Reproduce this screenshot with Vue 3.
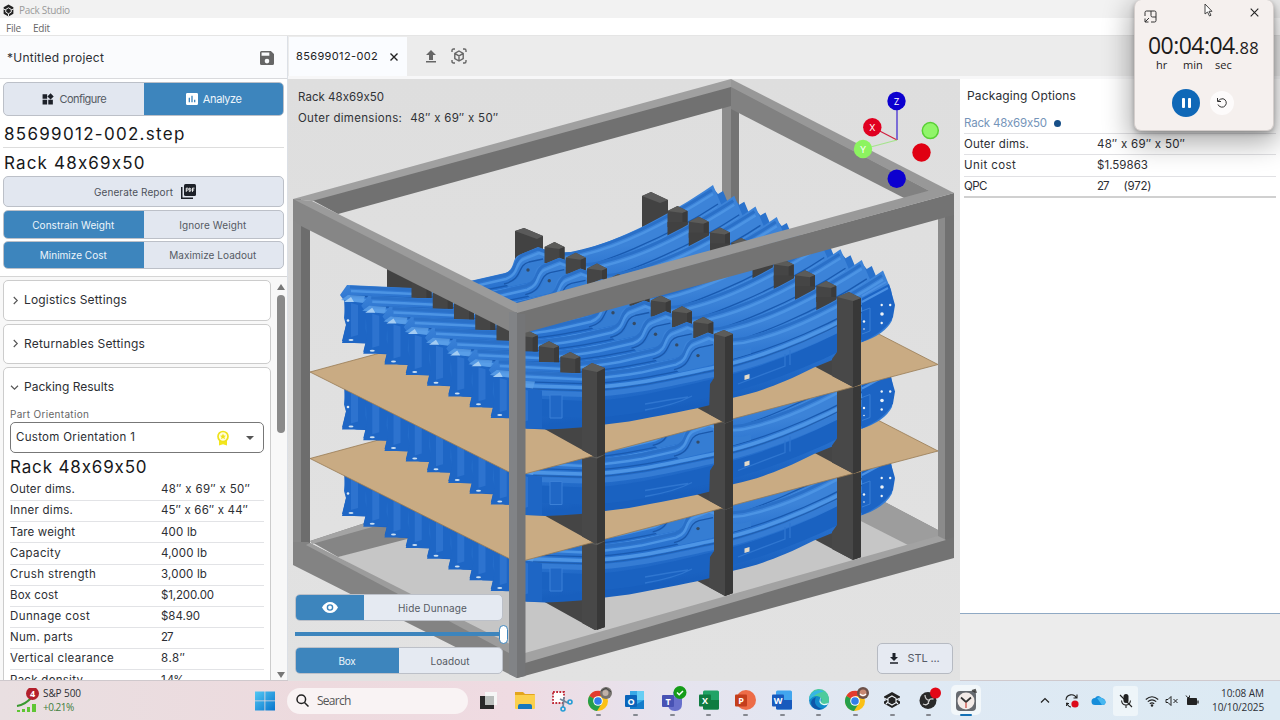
<script setup>
const vFit = {
  mounted(el, { value }) {
    const r = document.createRange()
    r.selectNodeContents(el)
    const w = r.getBoundingClientRect().width
    el.style.letterSpacing = (value - w) / (el.textContent.length - 0.5) + 'px'
  },
}
const results = [
  ['Outer dims.', 65, '48″ x 69″ x 50″', 89],
  ['Inner dims.', 63, '45″ x 66″ x 44″', 87],
  ['Tare weight', 65, '400 lb', 36],
  ['Capacity', 51, '4,000 lb', 46],
  ['Crush strength', 86, '3,000 lb', 46],
  ['Box cost', 48, '$1,200.00', 53],
  ['Dunnage cost', 80, '$84.90', 39],
  ['Num. parts', 63, '27', 12],
  ['Vertical clearance', 104, '8.8″', 24],
  ['Pack density', 73, '1.4%', 23],
]
const options = [
  ['Outer dims.', 65, '48″ x 69″ x 50″', 88],
  ['Unit cost', 52, '$1.59863', 51],
]
const layers = [173, 86.5, 0]
const parts = [0, 1, 2, 3, 4, 5, 6, 7, 8]
const stepOf = (i) => `translate(${i * 21.25} ${i * 10.7})`
const curve = 'M350 287L413 290Q447 287 470 283L505 275C519 270 513 259 523 255L538 249Q560 258 582 251C620 242 668 218 712 190'
const lower = 'M350 290L413 292C460 291 500 281 548 271C600 260 670 230 718 198'
const offices = [
  { name: 'excel', letter: 'X', c1: '#21a366', c2: '#107c41' },
  { name: 'powerpoint', letter: 'P', c1: '#ed6c47', c2: '#c43e1c' },
  { name: 'word', letter: 'W', c1: '#41a5ee', c2: '#185abd' },
]
</script>

<template>
  <div class="screen">
    <header class="titlebar">
      <svg class="app-icon" viewBox="0 0 24 24"><path d="M12 1l9 5v12l-9 5-9-5V6z" fill="#222"/><path d="M12 7l5 3v5l-5 3-5-3v-5z" fill="#222" stroke="#f2f2f2" stroke-width="1.800"/><path d="M2 9l5 2M22 9l-5 2M12 23v-5" stroke="#f2f2f2" stroke-width="1.800"/></svg>
      <span v-fit="51">Pack Studio</span>
    </header>
    <nav class="menubar"><span v-fit="15">File</span><span v-fit="17">Edit</span></nav>

    <div class="body">
      <aside class="left">
        <div class="project">
          <span v-fit="97">*Untitled project</span>
          <svg width="14" height="14" viewBox="3 3 18 18"><path fill="#666" d="M17 3H5a2 2 0 0 0-2 2v14a2 2 0 0 0 2 2h14a2 2 0 0 0 2-2V7zm-5 16a3 3 0 1 1 0-6 3 3 0 0 1 0 6zm3-10H5V5h10z"/></svg>
        </div>
        <div class="controls">
          <div class="toggle tall">
            <div class="seg">
              <svg width="12" height="12" viewBox="2 1 21 21"><path fill="#1d2129" d="M3 3h8v8H3zM3 13h8v8H3zM13 13h8v8h-8zM17 1.500L22.500 7 17 12.500 11.500 7z"/></svg>
              <span v-fit="47">Configure</span>
            </div>
            <div class="seg on">
              <svg width="12" height="12" viewBox="3 3 18 18"><path fill="#fff" fill-rule="evenodd" d="M5 3h14a2 2 0 0 1 2 2v14a2 2 0 0 1-2 2H5a2 2 0 0 1-2-2V5a2 2 0 0 1 2-2zm2 7v7h2v-7zm4-3v10h2V7zm4 6v4h2v-4z"/></svg>
              <span v-fit="39">Analyze</span>
            </div>
          </div>
          <div class="big file"><span v-fit="181">85699012-002.step</span></div>
          <div class="big rack"><span v-fit="141">Rack 48x69x50</span></div>
          <div class="report">
            <span v-fit="79">Generate Report</span>
            <svg width="15" height="15" viewBox="2 2 20 20"><path d="M3 6v15h15" fill="none" stroke="#1d2129" stroke-width="2"/><rect x="6" y="2" width="16" height="16" rx="2" fill="#1d2129"/><path d="M9 12.500V7.500h1.500a1.200 1.200 0 0 1 0 2.700H9M13 7.500v4.500h.8q1.400 0 1.400-2.200T13.800 7.500zM17.300 12.500V7.500H20M17.300 10H19.500" fill="none" stroke="#fff" stroke-width="1.200"/></svg>
          </div>
          <div class="toggle"><div class="seg on"><span v-fit="82">Constrain Weight</span></div><div class="seg"><span v-fit="67">Ignore Weight</span></div></div>
          <div class="toggle second"><div class="seg on"><span v-fit="67">Minimize Cost</span></div><div class="seg"><span v-fit="87">Maximize Loadout</span></div></div>
        </div>
        <div class="scroll">
          <div class="cards">
            <div class="card"><svg class="chev" viewBox="0 0 8 10"><path d="M2 1l4 4-4 4"/></svg><span v-fit="103">Logistics Settings</span></div>
            <div class="card"><svg class="chev" viewBox="0 0 8 10"><path d="M2 1l4 4-4 4"/></svg><span v-fit="121">Returnables Settings</span></div>
            <div class="card results">
              <div class="head"><svg class="chev wide" viewBox="0 0 10 8"><path d="M1 2l4 4 4-4"/></svg><span v-fit="90">Packing Results</span></div>
              <div class="label"><span v-fit="79">Part Orientation</span></div>
              <div class="select">
                <span v-fit="119">Custom Orientation 1</span>
                <svg class="medal" width="14" height="16" viewBox="0 0 14 16"><path d="M3 9h8v6.500l-4-1.300-4 1.300z" fill="#f3e61c"/><circle cx="7" cy="6.500" r="5" fill="#fffde0" stroke="#efe21b" stroke-width="1.700"/><path d="M7 3.500l.9 2 2.100.2-1.600 1.400.5 2.100L7 8.100l-1.900 1.100.5-2.100L4 5.700l2.100-.2z" fill="#efe21b"/></svg>
                <i class="caret"></i>
              </div>
              <div class="big inner"><span v-fit="137">Rack 48x69x50</span></div>
              <div v-for="r in results" :key="r[0]" class="row"><div><span v-fit="r[1]">{{ r[0] }}</span></div><span v-fit="r[3]">{{ r[2] }}</span></div>
            </div>
          </div>
          <div class="bar"><i class="up"></i><i class="thumb"></i><i class="down"></i></div>
        </div>
      </aside>

      <div class="work">
        <div class="tabs">
          <div class="tab"><span v-fit="82">85699012-002</span><svg width="10" height="10" viewBox="0 0 10 10"><path d="M1.500 1.500l7 7M8.500 1.500l-7 7" stroke="#222" stroke-width="1.400"/></svg></div>
          <svg class="upload" width="12" height="13" viewBox="0 0 12 13"><path fill="#666" d="M6 0l5 5H8v5H4V5H1zM1 11h10v1.500H1z"/></svg>
          <svg width="16" height="16" viewBox="0 0 16 16" fill="none" stroke="#666" stroke-width="1.400"><path d="M1 4V2.500Q1 1 2.500 1H4M12 1h1.500Q15 1 15 2.500V4M15 12v1.500q0 1.500-1.500 1.500H12M4 15H2.500Q1 15 1 13.500V12"/><path d="M8 3l4.200 2.500v5L8 13l-4.200-2.500v-5zM4 5.600l4 2.300 4-2.300M8 8v5"/></svg>
        </div>
        <div class="panes">
          <main class="view">
            <svg class="scene" viewBox="288 79 672 602" width="672" height="602">
              <defs>
                <linearGradient id="blue" gradientUnits="userSpaceOnUse" x1="500" y1="262" x2="508" y2="322"><stop offset="0" stop-color="#3c83d8"/><stop offset=".45" stop-color="#2770cd"/><stop offset="1" stop-color="#185fbe"/></linearGradient>
                <linearGradient id="bg" x1="0" y1="0" x2="0" y2="1"><stop offset="0" stop-color="#dedede"/><stop offset="1" stop-color="#e2e2e2"/></linearGradient>
                <g id="block"><path d="M0 3L10-2L20 3V19H0z" fill="#454545"/><path d="M0 3L10-2L20 3L15 5z" fill="#5b5b59"/><path d="M15 5L20 3V19H15z" fill="#3b3b3b"/></g>
                <g id="part">
                  <path d="M347 285L413 288Q450 285 470 281L505 273C516 269 511 259 519 255L538 247Q560 256 582 250C620 240 668 216 713 185L718 197L721 204L724 220L722 235Q715 249 691 257L666 273L644 282C610 299 590 306 564 312Q545 319 526 323T459 336L435 339L410 342Q380 345 354 343L365 341H342L346 325L344 318L345 302L340 295Z" fill="url(#blue)"/>
                  <path d="M350 321L413 324C460 323 500 312 548 301C600 289 660 264 708 235" fill="none" stroke="#1a62c1" stroke-width="17"/>
                  <path :d="curve" fill="none" stroke="#2a70c8" stroke-width="3"/>
                  <path :d="curve" fill="none" stroke="#4c94e4" stroke-width="2.500" transform="translate(1 4)"/>
                  <path :d="lower" fill="none" stroke="#195ab0" stroke-width="1.300" transform="translate(0 6)"/>
                  <path :d="lower" fill="none" stroke="#4d95e5" stroke-width="3.500" transform="translate(0 10)"/>
                  <path :d="lower" fill="none" stroke="#215faf" stroke-width="1.200" transform="translate(0 13)"/>
                  <path :d="lower" fill="none" stroke="#357cd4" stroke-width="5" transform="translate(0 17)"/>
                  <path d="M506 284C526 279 518 266 531 263L543 259Q567 269 581 262V268L544 279L509 287z" fill="#357dd3"/>
                  <path d="M504 284C524 279 516 266 529 262L543 259" fill="none" stroke="#1a58ab" stroke-width="1.300"/>
                  <circle cx="528" cy="270" r="1.700" fill="#354b65"/>
                  <path d="M344 300L372 305V343H342L346 325z" fill="#1e66c5"/>
                  <path d="M351 303L358 305V335L351 337z" fill="#2d73cf"/>
                  <path d="M341 300L348 295L365 296L363 303z" fill="#5da0e8" opacity=".8"/>
                  <path d="M344 302l7-5 3 5z" fill="#a4cdf3"/>
                  <ellipse cx="351" cy="340" rx="2.500" ry="1" fill="#cbdff2"/>
                </g>
                <g id="layer">
                  <path d="M387 262l12-3 13 6v32h-25zM515 231l9-3 19 8v30h-28zM642 196l9-4 17 8v30h-26z" fill="#424242"/>
                  <path d="M515 231l9-3 19 8-6 3zM642 196l9-4 17 8-8 3z" fill="#5a5a5a"/>
                  <path d="M541 410V427L595 457L605 454V390zM690 404L725 423L733 420V380zM810 364L853 387L861 384V340z" fill="#454545"/>
                  <g v-for="i in parts" :key="i">
                    <path v-if="i < 8" :transform="stepOf(i)" d="M713 188L718 194L723 191L728 203V218L712 228L700 215z" fill="#2a72cc"/>
                    <use href="#part" :transform="stepOf(i)"/>
                    <g v-if="i < 8" :transform="stepOf(i)"><use href="#block" x="411.500" y="279"/><use href="#block" x="544.500" y="244"/><use href="#block" x="667.500" y="208" /><path d="M667.500 222h20v9l-20 8z" fill="#414141"/></g>
                  </g>
                  <circle cx="348" cy="320.500" r="1.300" fill="#dbe8f4"/>
                  <path d="M582 369L592 363L605 368V454L595 457L582 450V427zM714 334L724 330L733 334V420L725 423L709 414L710 384L714 378zM837 297L849 292L861 298V384L853 387L832 376V359L837 352z" fill="#484848"/>
                  <path d="M597 372L605 368V454L597 457zM725 337L733 334V420L725 423zM853 301L861 298V384L853 387z" fill="#383838"/>
                  <path d="M582 369L592 363L605 368L597 372zM714 334L724 330L733 334L725 337zM837 297L849 292L861 298L853 301z" fill="#5c5c5a"/>
                  <path d="M862 298L889 284L895 305L893 317Q886 331 862 342z" fill="#1c64c4"/>
                  <path d="M862 296L886 282M862 302L888 288" stroke="#4b91e4" stroke-width="2"/>
                  <path d="M862 311l8-3v23l-8 3" fill="none" stroke="#397fd5"/>
                  <g fill="#eef3f8"><circle cx="881.700" cy="305" r="1.200"/><circle cx="890.200" cy="305" r="1.200"/><circle cx="882" cy="314" r="1.800"/><circle cx="881.700" cy="323" r="1.200"/><circle cx="864" cy="321.500" r="1.200"/><circle cx="864" cy="329" r=".8"/></g>
                  <path d="M744.500 375.500l5-1.500v4.500l-5 1.500z" fill="#e3dac9"/>
                  <path d="M550 395v23h12v-23z" fill="#2067c5" stroke="#3b80d7"/>
                  <path d="M645 410Q675 405 692 396M645 404Q673 399 688 397M738 384l47-18v-12M790 350v15" stroke="#2f76d0" stroke-width="1.300" fill="none"/>
                </g>
              </defs>
              <rect x="288" y="79" width="672" height="602" fill="url(#bg)"/>
              <path d="M338 557L405 537L860 519L910 543L938 541L526 656L400 592z" fill="#c6c6c6"/>
              <path d="M310 541L365 523L731 421L938 530L908 543L731 455L338 557z" fill="#858585"/>
              <path d="M731 421L938 530V540L908 545L731 455z" fill="#9d9d9d"/><path d="M310 541L365 523L731 421V426L312 544z" fill="#a4a4a4"/>
              <!-- rear top rails and post -->
              <path d="M722 106H731V300H722z" fill="#8b8b8b"/><path d="M731 106H739V300H731z" fill="#737373"/>
              <path d="M312 200L731 86V106L338 214z" fill="#717171"/><path d="M731 86L930 191L908 200L731 109z" fill="#818181"/>
              <path d="M293 199L731 79V87L312 201z" fill="#a0a0a0"/><path d="M731 79L954 193L935 194L731 87z" fill="#989898"/>
              <template v-for="(y, n) in layers" :key="y">
                <path v-if="n > 0" :transform="`translate(0 ${y})`" d="M310 372L517 476L938 364.500L731 258z" fill="#c9ab83" stroke="#987b54" stroke-width=".8"/>
                <use href="#layer" :y="y"/>
              </template>
              <!-- front frame -->
              <path d="M293 199H301V560H293z" fill="#878787"/><path d="M301 205H310V543H301z" fill="#6d6d6d"/>
              <path d="M938 205H946V540H938z" fill="#8b8b8b"/><path d="M945 196H954V558H945z" fill="#717171"/>
              <path d="M293 542H308L509 648L525 656L517 678L293 565z" fill="#838383"/><path d="M306 545L310 543L520 649L509 653z" fill="#9c9c9c"/>
              <path d="M517 662L954 537V558L517 678z" fill="#737373"/><path d="M525 653L938 536L946 540L525 663z" fill="#a2a2a2"/>
              <path d="M293 199L301 202L517 312V335L301 226L293 220z" fill="#868686"/><path d="M293 199L312 201L517 303L517 313z" fill="#9b9b9b"/>
              <path d="M517 312L954 193V215L517 335z" fill="#737373"/><path d="M517 303L935 189L954 193L517 313z" fill="#999"/>
              <path d="M509 312H517V678L509 674z" fill="#818386"/><path d="M517 314H525.500V676L517 678z" fill="#747577"/>
              <!-- orientation gizmo -->
              <g stroke-width="1.200"><path d="M897 101V140" stroke="#3a20d0"/><path d="M872 127L897 140" stroke="#d02040"/><path d="M863 149L897 140" stroke="#a5e48c"/></g>
              <circle cx="896.500" cy="101" r="9.200" fill="#0c00cf"/><circle cx="872.300" cy="127.300" r="9.200" fill="#e00020"/><circle cx="863" cy="149" r="9.200" fill="#8cf460"/>
              <circle cx="930.300" cy="130.600" r="8" fill="#91f56a" stroke="#59cf35" stroke-width="1.500"/><circle cx="921.500" cy="152.500" r="9.200" fill="#e00012"/><circle cx="896.700" cy="178.700" r="9.200" fill="#0c00cf"/>
              <g class="axis"><text x="896.500" y="104.500">Z</text><text x="872.300" y="131">X</text><text x="863" y="152.500">Y</text></g>
            </svg>
            <div class="caption"><div><span v-fit="86">Rack 48x69x50</span></div><div class="dims"><span v-fit="104">Outer dimensions:</span><span v-fit="88">48″ x 69″ x 50″</span></div></div>
            <div class="viewctl">
              <div class="toggle vt"><div class="seg on eye"><svg width="16" height="11" viewBox="0 0 16 11"><path fill="#fff" fill-rule="evenodd" d="M8 0Q13 0 16 5.500Q13 11 8 11T0 5.500Q3 0 8 0zm0 2.200a3.300 3.300 0 1 0 0 6.600 3.300 3.300 0 0 0 0-6.600zm0 1.400a1.900 1.900 0 1 1 0 3.800 1.900 1.900 0 0 1 0-3.800z"/></svg></div><div class="seg"><span v-fit="69">Hide Dunnage</span></div></div>
              <div class="slider"><i></i></div>
              <div class="toggle vt"><div class="seg on"><span v-fit="17">Box</span></div><div class="seg"><span v-fit="39">Loadout</span></div></div>
            </div>
            <div class="stl"><svg width="10" height="11" viewBox="0 0 10 11"><path fill="#1d2129" d="M3.500 0h3v4H9L5 8 1 4h2.500zM1 9.300h8v1.400H1z"/></svg><span v-fit="32">STL ...</span></div>
          </main>
          <aside class="right">
            <div class="options">
              <h2><span v-fit="109">Packaging Options</span></h2>
              <div class="orow link"><span v-fit="83">Rack 48x69x50</span><i></i></div>
              <div v-for="o in options" :key="o[0]" class="orow"><div><span v-fit="o[1]">{{ o[0] }}</span></div><span v-fit="o[3]">{{ o[2] }}</span></div>
              <div class="orow last"><div><span v-fit="23">QPC</span></div><span v-fit="12" class="n">27</span><span v-fit="28">(972)</span></div>
            </div>
          </aside>
        </div>
      </div>
    </div>

    <footer class="taskbar">
      <div class="stock">
        <svg width="24" height="26" viewBox="0 0 24 26"><path d="M2 18Q10 17 17 9" stroke="#39992e" stroke-width="2" fill="none"/><path d="M2 22h3v2H2zM7 21h3v3H7zM12 19h3v5h-3zM17 16h4v8h-4z" fill="#5fc634"/><circle cx="17.500" cy="5.500" r="6.500" fill="#b3202c"/><text x="17.500" y="9" class="badge">4</text></svg>
        <div><span v-fit="38">S&amp;P 500</span><span v-fit="31" class="gain">+0.21%</span></div>
      </div>
      <svg class="win" width="20" height="20" viewBox="0 0 20 20"><defs><linearGradient id="w" x2="1" y2="1"><stop stop-color="#52c8f4"/><stop offset="1" stop-color="#0874cc"/></linearGradient></defs><path fill="url(#w)" d="M0 .5h9.500v9H0zM10.300.5H20v9h-9.700zM0 10.200h9.500v9.300H0zM10.300 10.200H20v9.300h-9.700z"/></svg>
      <div class="search"><svg width="13" height="13" viewBox="0 0 13 13" fill="none" stroke="#222" stroke-width="1.500"><circle cx="5.300" cy="5.300" r="4.300"/><path d="M8.500 8.500l4 4"/></svg><span v-fit="34">Search</span></div>
      <div class="apps">
        <div class="slot first"><svg viewBox="0 0 24 24"><path d="M9 4h12v13H9z" fill="#f6f6f6"/><path d="M4 8h14v13H4z" fill="#292929"/><path d="M9 8h9v9H9z" fill="#b9bdbb"/></svg></div>
        <div class="slot"><svg viewBox="0 0 24 24"><path d="M2 4h8l2 2h9q1 0 1 1v13H2z" fill="#e3a51d"/><path d="M2 7h20v13q0 1-1 1H3q-1 0-1-1z" fill="#fbd04d"/><path d="M5 21v-3q0-2 2-2h10q2 0 2 2v3z" fill="#1678be"/></svg></div>
        <div class="slot"><svg viewBox="0 0 24 24"><path d="M3 4h11v11H3z" fill="#fff" stroke="#c02a38" stroke-width="1.800" stroke-dasharray="1.800 1.400"/><path d="M10 11l8 4M14 9l-1 10" stroke="#70879b" stroke-width="1.800"/><circle cx="20" cy="14" r="2" fill="none" stroke="#249dd6" stroke-width="1.600"/><circle cx="13" cy="21" r="2" fill="none" stroke="#249dd6" stroke-width="1.600"/></svg></div>
        <div class="slot run"><svg viewBox="0 0 24 24"><circle cx="11" cy="13" r="10" fill="#fbc116"/><path d="M11 13L2.300 8A10 10 0 0 1 20 8h-9z" fill="#e33b2e"/><path d="M2.300 8A10 10 0 0 0 10 23l5-8-4-2z" fill="#269f4b"/><circle cx="11" cy="13" r="4.800" fill="#fff"/><circle cx="11" cy="13" r="3.800" fill="#327ee8"/><circle cx="19" cy="5" r="6" fill="#77736f"/><circle cx="18.500" cy="5" r="3" fill="#c0b1a7"/><path d="M14 3l5-3 5 4" stroke="#444" fill="none"/></svg></div>
        <div class="slot run"><svg viewBox="0 0 24 24"><path d="M7 3h14v18H7z" fill="#38a9e6"/><path d="M14 3h7v9h-7z" fill="#67cef4"/><path d="M7 12l7 4 7-4v9H7z" fill="#147cca"/><rect x="2" y="7" width="12" height="12" rx="1" fill="#0a64ba"/><text x="8" y="16.500">O</text></svg></div>
        <div class="slot run"><svg viewBox="0 0 24 24"><circle cx="17" cy="6" r="4" fill="#7e86df"/><path d="M8 9h14v7q0 7-7 7t-7-7z" fill="#6870cc"/><rect x="2" y="7" width="12" height="12" rx="1" fill="#4852b4"/><text x="8" y="16.500">T</text><circle cx="20" cy="4.500" r="6.500" fill="#159c19"/><path d="M17 4.500l2.200 2.200L23 3" stroke="#fff" stroke-width="1.500" fill="none"/></svg></div>
        <div v-for="o in offices" :key="o.name" class="slot run"><svg viewBox="0 0 24 24"><circle v-if="o.letter === 'P'" cx="13" cy="12" r="10" :fill="o.c1"/><rect v-else x="6" y="2.500" width="16" height="19" rx="1.500" :fill="o.c1"/><path v-if="o.letter !== 'P'" d="M6 12h16v8q0 1.500-1.500 1.500h-13Q6 21.500 6 20z" :fill="o.c2"/><rect x="2" y="6.500" width="12" height="12" rx="1" :fill="o.c2"/><text x="8" y="16">{{ o.letter }}</text></svg></div>
        <div class="slot run"><svg viewBox="0 0 24 24"><circle cx="12" cy="12" r="10" fill="#118acb"/><path d="M2 12A10 10 0 0 1 22 10q1 7-6 7-4 0-2-3 2-5-4-6-5 0-8 4z" fill="#4ccb9c"/><path d="M2 12A10 10 0 0 1 17 3.500Q10 4 2 12z" fill="#36b6e5"/><path d="M14 9q-4 5 2 8 4 1 6-2l-5 1q-5-1-3-7z" fill="#eafafa"/><path d="M9 9q-4 9 7 12Q5 23 4 15q0-4 5-6z" fill="#0d57a9"/></svg></div>
        <div class="slot run"><svg viewBox="0 0 24 24"><circle cx="11" cy="13" r="10" fill="#fbc116"/><path d="M11 13L2.300 8A10 10 0 0 1 20 8h-9z" fill="#e33b2e"/><path d="M2.300 8A10 10 0 0 0 10 23l5-8-4-2z" fill="#269f4b"/><circle cx="11" cy="13" r="4.800" fill="#fff"/><circle cx="11" cy="13" r="3.800" fill="#327ee8"/><circle cx="19" cy="5" r="6" fill="#6c514a"/><circle cx="19" cy="5" r="3.500" fill="#c88872"/><path d="M16 6q3 3 6 0" stroke="#fff" stroke-width="1.500" fill="none"/></svg></div>
        <div class="slot run"><svg viewBox="0 0 24 24"><path d="M12 4l8 4.500v2l-2.500 1.500 2.500 1.500v2L12 20l-8-4.500v-2L6.500 12 4 10.500v-2z" fill="#222"/><path d="M12 8l4 2.300v4.400L12 17l-4-2.300v-4.400zM4 10l4 2M20 10l-4 2M6 16l2-2M18 16l-2-2" fill="none" stroke="#edf2f7" stroke-width="1.100"/></svg></div>
        <div class="slot run"><svg viewBox="0 0 24 24"><circle cx="11" cy="12.500" r="8.500" fill="#292929"/><path d="M8 7q0 5 5 5.500M16.500 11q-6-1-5 5M6 16q5 2.500 6-3.500" stroke="#ccc" stroke-width="1.300" fill="none"/><circle cx="18.500" cy="5" r="5.500" fill="#e20716"/></svg></div>
        <div class="slot active"><svg viewBox="0 0 24 24"><rect x="2" y="3" width="20" height="20" rx="4" fill="#666a70"/><circle cx="12" cy="13" r="8.500" fill="#f3ebe8"/><path d="M12 13v7" stroke="#cf5148" stroke-width="1.300"/><path d="M12 14L7 9.500M12 14l5-4.500" stroke="#333" stroke-width="1.700"/><path d="M18 3l3-1 1 3" stroke="#555" stroke-width="2"/></svg></div>
      </div>
      <div class="tray">
        <svg width="10" height="7" viewBox="0 0 10 7" class="t-chev"><path d="M1 5.500l4-4 4 4" fill="none" stroke="#222" stroke-width="1.200"/></svg>
        <svg width="16" height="16" viewBox="0 0 16 16" class="t-sync"><path d="M2 7A5.500 5.500 0 0 1 12.500 5M13 1.500V5H9.500M3 9.500l-.5 3.500M2 10.500h3M3 11q2 3 4 3" fill="none" stroke="#222" stroke-width="1.100"/><circle cx="11" cy="11" r="3.600" fill="#dc0a1b"/></svg>
        <svg width="15" height="11" viewBox="0 0 15 11" class="t-cloud"><path d="M4 10A3.500 3.500 0 0 1 4 3Q7-1 10.500 3 15 4 14.500 8 14 10 11.500 10z" fill="#168dda"/><path d="M6 3Q10 1 12 4q3 1 2.500 4Q14 10 11 10z" fill="#48b8f1"/></svg>
        <div class="mic"><svg width="16" height="16" viewBox="0 0 16 16"><rect x="5.500" y="1" width="5" height="9" rx="2.500" fill="#222"/><path d="M3.500 7.500Q4 12 8 12t4.500-4.500M8 12v3M2 2l12 12" stroke="#222" stroke-width="1.100" fill="none"/></svg></div>
        <svg width="14" height="12" viewBox="0 0 14 12" class="t-wifi"><path d="M.8 4.500Q7-1 13.200 4.500M2.800 6.700Q7 3 11.200 6.700M4.800 8.800Q7 7 9.200 8.800" fill="none" stroke="#222" stroke-width="1.100"/><circle cx="7" cy="10.500" r="1.200" fill="#222"/></svg>
        <svg width="14" height="12" viewBox="0 0 14 12" class="t-snd"><path d="M1 4.500h2L6 1.500v9l-3-3H1zM8.500 4l4 4M12.500 4l-4 4" fill="none" stroke="#222"/></svg>
        <svg width="14" height="12" viewBox="0 0 14 12" class="t-bat"><path d="M2.500 3.500h9v6H2.500z" fill="#222" stroke="#222"/><path d="M13 5.500v3" stroke="#222" stroke-width="1.300"/><path d="M1 .5l1.500 2h2V.5M3 2.500v4" stroke="#222" fill="none"/></svg>
        <div class="clock"><span v-fit="43">10:08 AM</span><span v-fit="52">10/10/2025</span></div>
      </div>
    </footer>

    <div class="timer">
      <svg class="pop" width="13" height="13" viewBox="0 0 13 13" fill="none" stroke="#333"><path d="M1 6V2.500Q1 1 2.500 1h8Q12 1 12 2.500v8q0 1.500-1.500 1.500H7M12 7H8.500Q7 7 7 5.500V1M5 8l-4 4M1 8.500V12h3.500"/></svg>
      <svg class="cursor" width="9" height="14" viewBox="0 0 9 14"><path d="M1 1v10l2.500-2 2 4 1.500-.8-2-3.900H8z" fill="#fff" stroke="#444"/></svg>
      <svg class="close" width="9" height="9" viewBox="0 0 9 9"><path d="M.7.7l7.600 7.600M8.300.7L.7 8.300" stroke="#222" stroke-width="1.100"/></svg>
      <div class="digits"><span v-fit="87" class="main">00:04:04</span><span v-fit="24" class="ms">.88</span></div>
      <div class="units"><span>hr</span><span>min</span><span>sec</span></div>
      <div class="btns"><div class="pause"><i></i><i></i></div><div class="reset"><svg width="12" height="12" viewBox="0 0 12 12"><path d="M1.500 1v3.500H5M2 4.300Q4 1.500 7 1.700A4.300 4.300 0 1 1 2 7.500" fill="none" stroke="#333"/></svg></div></div>
    </div>
  </div>
</template>

<style>
html, body { margin: 0; overflow: hidden; }
</style>
<style scoped>
* { box-sizing: border-box; }
.screen { position: relative; width: 1280px; height: 720px; overflow: hidden; display: flex; flex-direction: column; background: #ececec; color: #2c2e33; font: 11px/1 Inter, "Noto Sans", sans-serif; white-space: nowrap; }
span { white-space: nowrap; flex: none; font-variant-ligatures: none; font-feature-settings: "calt" 0, "liga" 0; }
svg { flex: none; display: block; }
.titlebar { height: 18px; flex: none; background: #f2f2f2; display: flex; align-items: center; gap: 4px; padding: 2px 0 0 2px; color: #9a9a9a; font: 10px/1 "Open Sans", sans-serif; }
.app-icon { width: 13px; height: 13px; }
.menubar { height: 18px; flex: none; background: #fff; border-bottom: 1px solid #e5e5e5; display: flex; align-items: center; gap: 12px; padding: 2px 0 0 6px; color: #666; font: 10px/1 "Open Sans", sans-serif; }
.body { height: 645px; flex: none; display: flex; }
.left { width: 288px; display: flex; flex-direction: column; background: #fff; border-right: 1px solid #dce0e6; }
.project { height: 43px; flex: none; background: #fafbfd; border-bottom: 1px solid #d9dadd; display: flex; justify-content: space-between; align-items: center; padding: 1px 13px 0 7px; font-size: 12px; }
.controls { height: 198px; flex: none; padding: 3px 3px 0; border-bottom: 1px solid #d5d5d5; }
.toggle { display: flex; height: 29px; border: 1px solid #bcc0c8; border-radius: 5px; overflow: hidden; background: #e2e7f0; font-size: 10px; }
.toggle.tall { height: 34px; font-size: 11px; }
.toggle.second { margin-top: 2px; height: 28px; }
.seg { flex: 1; display: flex; align-items: center; justify-content: center; gap: 5px; color: #555a63; }
.seg.on { background: #3d85bd; color: #edf5fb; margin: -1px; }
.big { color: #17181a; font-size: 17px; display: flex; align-items: center; }
.file { height: 32px; padding: 5px 0 0 1px; border-bottom: 1px solid #ddd; }
.rack { height: 28px; padding: 3px 0 0 1px; }
.report { height: 31px; margin: 0 0 3px; border: 1px solid #bcc0c8; border-radius: 5px; background: #e2e7f0; display: flex; justify-content: center; align-items: center; gap: 8px; color: #4d525b; font-size: 10px; padding-left: 3px; }
.scroll { flex: 1; min-height: 0; display: flex; background: #f8f8f8; overflow: hidden; }
.cards { width: 271px; padding: 3px 0 0 3px; display: flex; flex-direction: column; gap: 3px; }
.card { height: 40.500px; flex: none; border: 1px solid #ccc; border-radius: 5px; background: #fff; display: flex; align-items: center; font-size: 12px; padding-left: 8px; gap: 5px; }
.chev { width: 7px; height: 9px; fill: none; stroke: #555; stroke-width: 1.300; }
.chev.wide { width: 9px; height: 7px; }
.card.results { display: block; height: 340px; padding: 0 6px; }
.head { height: 38px; display: flex; align-items: center; gap: 5px; }
.label { height: 16px; display: flex; align-items: center; color: #666; font-size: 10px; }
.select { height: 31px; border: 1px solid #777; border-radius: 5px; display: flex; align-items: center; padding: 0 9px 0 5px; font-size: 11.500px; }
.medal { margin-left: auto; margin-right: 16px; }
.caret { border: 4px solid transparent; border-top-color: #555; border-bottom: 0; }
.inner { height: 27px; padding-top: 1px; }
.row { height: 21.150px; font-size: 11.500px; display: flex; align-items: center; border-bottom: 1px solid #e2e3e6; }
.row div { width: 151px; }
.bar { width: 16px; display: flex; flex-direction: column; align-items: center; padding: 7px 0 3px 3px; }
.bar .up, .bar .down { border: 4px solid transparent; }
.bar .up { border-bottom: 6px solid #777; border-top: 0; }
.bar .down { border-top: 6px solid #777; border-bottom: 0; margin-top: auto; }
.thumb { width: 8px; height: 138px; margin-top: 5px; border-radius: 4px; background: #8a8a8a; }
.work { width: 992px; display: flex; flex-direction: column; }
.tabs { height: 43px; flex: none; background: #ececec; border-bottom: 3px solid #f7f7f8; display: flex; align-items: center; padding-left: 1px; }
.tab { width: 118px; align-self: stretch; margin-top: 1px; background: #fafcff; display: flex; align-items: center; justify-content: space-between; padding: 0 8px 0 7px; color: #222; }
.upload { margin: 0 14px 0 17.500px; }
.panes { flex: 1; min-height: 0; display: flex; }
.view { position: relative; width: 672px; overflow: hidden; }
.scene { position: absolute; inset: 0; }
.axis text { fill: #fff; font: 9px Inter, sans-serif; text-anchor: middle; }
.caption { position: absolute; left: 10px; top: 13px; display: flex; flex-direction: column; gap: 9.500px; color: #303236; font-size: 11.500px; }
.dims { display: flex; gap: 8px; }
.viewctl { position: absolute; left: 7px; top: 515px; width: 208px; }
.vt { height: 27px; background: #e5eaf2; }
.vt .eye { flex: 0 0 69px; }
.vt .seg.on:not(.eye) { flex: 0 0 104px; }
.slider { height: 26px; display: flex; align-items: center; background: linear-gradient(#3d85bd, #3d85bd) center / 100% 4px no-repeat; justify-content: flex-end; }
.slider i { width: 9px; height: 19px; background: #fff; border: 1.500px solid #3d85bd; border-radius: 5px; margin-right: -5px; }
.stl { position: absolute; left: 589px; top: 564px; width: 76px; height: 31px; border: 1px solid #b6bac2; border-radius: 5px; background: #e6eaf2; display: flex; align-items: center; justify-content: center; gap: 9px; color: #555b66; font-size: 11px; padding-right: 2px; }
.right { width: 320px; background: #ececec; }
.options { height: 535px; background: #fff; border-bottom: 1px solid #8fa9c4; padding: 1px 4px 0 4px; font-size: 11.500px; }
h2 { margin: 0; height: 33px; font-size: 12px; font-weight: 400; display: flex; align-items: center; padding-left: 3px; padding-bottom: 2px; }
.orow { height: 21.200px; border-bottom: 1px solid #e1e1e4; display: flex; align-items: center; padding-top: 1px; }
.orow div { width: 133px; }
.link { color: #7594b9; }
.link i { width: 7px; height: 7px; border-radius: 50%; background: #174f88; margin-left: 7px; }
.last { border-bottom: 2px solid #d0d0d0; }
.n { margin-right: 15px; }
.taskbar { height: 40px; margin-top: -1px; flex: none; border-top: 1px solid #cfc9cd; background: linear-gradient(90deg, #e9dfe1, #eddade 25%, #efdbe2 40%, #e6e3ee 52%, #dfe9f4 70%, #dceaf3); display: flex; align-items: center; font-family: "Open Sans", sans-serif; }
.stock { width: 240px; margin-left: 15px; display: flex; gap: 4px; font-size: 10px; }
.stock > div { display: flex; flex-direction: column; align-items: flex-start; gap: 4px; padding-bottom: 2px; }
.gain { color: #3e7d3c; }
.badge { fill: #fff; font: bold 9px "Open Sans", sans-serif; text-anchor: middle; }
.search { width: 181px; height: 26px; margin-left: 12px; border-radius: 13px; background: #f9f3f4; display: flex; align-items: center; gap: 8px; padding-left: 9px; font-size: 12px; color: #555; }
.apps { display: flex; height: 39px; padding-bottom: 1px; margin-left: 1px; }
.slot { width: 36.700px; display: flex; justify-content: center; align-items: center; position: relative; }
.slot.first { width: 38px; }
.slot svg { width: 24px; height: 24px; overflow: visible; }
.slot text { fill: #fff; font: bold 9px "Open Sans", sans-serif; text-anchor: middle; }
.slot.run::after, .slot.active::after { content: ""; position: absolute; bottom: 3px; width: 5px; height: 2px; border-radius: 1px; background: #858890; }
.slot.active::after { width: 12px; background: #1470b5; }
.slot.active svg { background: #f2f7fa; box-shadow: 0 0 0 3px #f2f7fa; border-radius: 2px; }
.tray { margin-left: auto; margin-right: 16px; display: flex; align-items: center; }
.t-chev { margin-right: 14px; }
.t-sync { margin-right: 11px; }
.t-cloud { margin-right: 7px; }
.mic { width: 25px; height: 30px; background: #eef5f9; border-radius: 3px; display: flex; align-items: center; justify-content: center; margin-right: 7px; }
.t-wifi { margin-right: 6px; }
.t-snd { margin-right: 6px; }
.t-bat { margin-right: 13px; }
.clock { width: 52px; display: flex; flex-direction: column; align-items: flex-end; gap: 4px; font-size: 10px; padding-bottom: 2px; }
.timer { position: absolute; left: 1134px; top: 0; width: 140px; height: 131px; background: #f5f0ee; border: 1px solid #d4cecc; border-top: 0; border-radius: 7px; box-shadow: 0 8px 28px 4px #0005, 0 2px 5px #0004; color: #1d1b1a; }
.pop { position: absolute; left: 9px; top: 10px; }
.cursor { position: absolute; left: 69px; top: 3px; }
.close { position: absolute; left: 115px; top: 8px; }
.digits { display: flex; align-items: baseline; padding: 34px 0 0 13px; height: 58px; font-family: "Open Sans", sans-serif; font-weight: 400; }
.main { font-size: 23px; }
.ms { font-size: 16.500px; }
.units { display: flex; padding: 0 0 1px 21px; font: 11px/14px "Open Sans", sans-serif; }
.units span:nth-child(1) { width: 27px; }
.units span:nth-child(2) { width: 32px; }
.btns { display: flex; align-items: center; gap: 10px; padding: 16px 0 0 37px; }
.pause { width: 28px; height: 28px; border-radius: 50%; background: #0f68b7; display: flex; align-items: center; justify-content: center; gap: 3px; }
.pause i { width: 3px; height: 10px; background: #fff; border-radius: 1px; }
.reset { width: 24px; height: 24px; border-radius: 50%; background: #fdfbfb; display: flex; align-items: center; justify-content: center; }
</style>
